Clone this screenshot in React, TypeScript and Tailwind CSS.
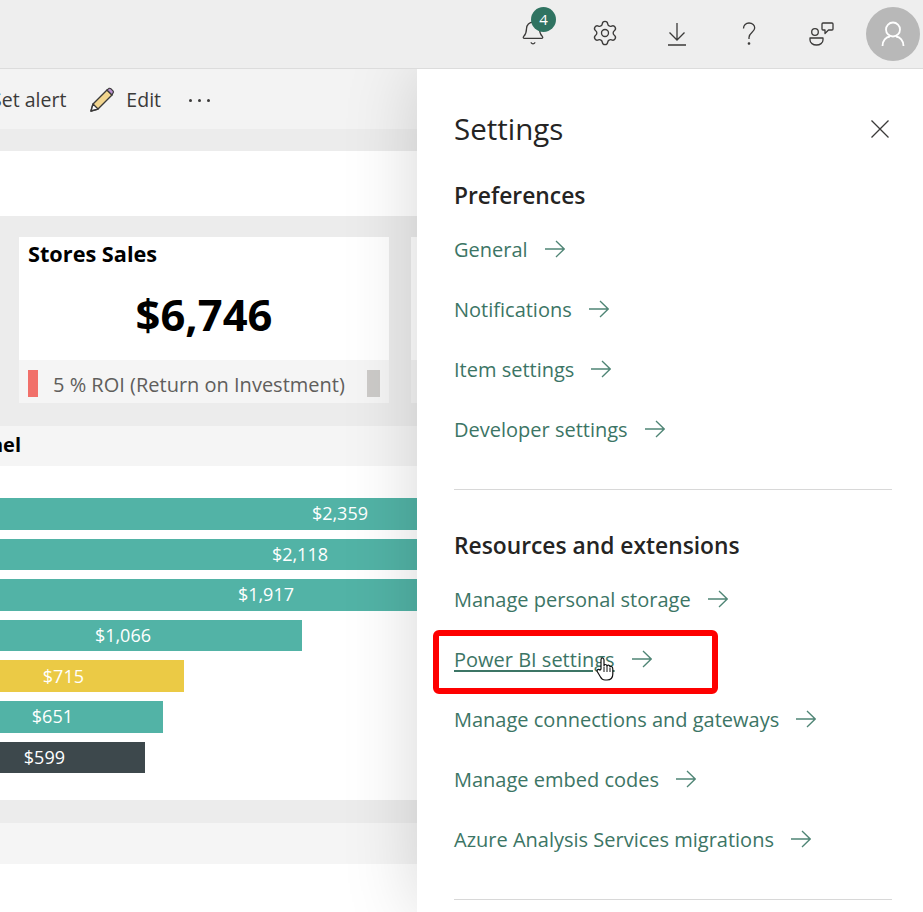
import { Bell, Settings } from 'lucide-react';

const bars = [
  { value: '$2,359', width: 'w-[417px]', pad: 'pr-[49px]', color: 'bg-[#52b3a6]' },
  { value: '$2,118', width: 'w-[417px]', pad: 'pr-[89px]', color: 'bg-[#52b3a6]' },
  { value: '$1,917', width: 'w-[417px]', pad: 'pr-[123px]', color: 'bg-[#52b3a6]' },
  { value: '$1,066', width: 'w-[302px]', pad: 'pr-[151px]', color: 'bg-[#52b3a6]' },
  { value: '$715', width: 'w-[184px]', pad: 'pr-[100px]', color: 'bg-[#ebca45]' },
  { value: '$651', width: 'w-[163px]', pad: 'pr-[90px]', color: 'bg-[#52b3a6]' },
  { value: '$599', width: 'w-[145px]', pad: 'pr-[80px]', color: 'bg-[#3d484c]' },
];

const preferences = ['General', 'Notifications', 'Item settings', 'Developer settings'];
const resources = [
  'Manage personal storage',
  'Power BI settings',
  'Manage connections and gateways',
  'Manage embed codes',
  'Azure Analysis Services migrations',
];

function SettingsLink({ label }: { label: string }) {
  const active = label === 'Power BI settings';
  return (
    <div className="flex h-[60px] items-center text-[20px] text-[#3c7565]">
      <span className={active ? 'underline underline-offset-[3px] decoration-[2px]' : ''}>{label}</span>
      <svg width="20" height="18" viewBox="0 0 20 18" fill="none" stroke="#4f8575" strokeWidth="1.3" className="mb-[3px] ml-[17px]">
        <path d="M0 9 H19 M11 1 L19.2 9 L11 17" />
      </svg>
    </div>
  );
}

function Pencil() {
  return (
    <svg width="26" height="26" viewBox="0 0 26 26" fill="none">
      <path d="M2 24 L4 17 L18 3 L23 8 L9 22 Z" fill="#f2d58e" stroke="#3b3a39" strokeWidth="1.4" strokeLinejoin="round" />
      <path d="M18 3 L20 1.4 Q21 1 22 1.8 L24 3.8 Q25 5 24 6 L23 8 Z" fill="#b98fd0" stroke="#3b3a39" strokeWidth="1.2" strokeLinejoin="round" />
      <path d="M2 24 L4 17 L9 22 Z" fill="#fff" stroke="#3b3a39" strokeWidth="1.4" strokeLinejoin="round" />
    </svg>
  );
}

function DownloadIcon() {
  return (
    <svg width="20" height="24" viewBox="0 0 20 24" fill="none" stroke="#3b3a39" strokeWidth="1.3">
      <path d="M10 1 V17.5 M2.5 10.5 L10 18 L17.5 10.5 M1 23 H19" />
    </svg>
  );
}

function HelpIcon() {
  return (
    <svg width="14" height="24" viewBox="0 0 14 24" fill="none" stroke="#3b3a39" strokeWidth="1.3">
      <path d="M1.5 6.5 C1.5 3 4 1 7 1 C10.5 1 12.7 3.2 12.7 6 C12.7 10 7 10.5 7 15.5 V17" />
      <circle cx="7" cy="21.5" r="0.7" fill="#3b3a39" />
    </svg>
  );
}

function FeedbackIcon() {
  return (
    <svg width="25" height="24" viewBox="0 0 25 24" fill="none" stroke="#3b3a39" strokeWidth="1.3" strokeLinejoin="round">
      <circle cx="6" cy="10" r="3.3" />
      <path d="M1 16 H14 V18 C14 21 11 23 7.5 23 C4 23 1 21 1 18 Z" />
      <path d="M14 1 H23 Q24 1 24 2 V7 Q24 8 23 8 H19.5 L16 11.5 V8 H14 Q13 8 13 7 V2 Q13 1 14 1 Z" />
    </svg>
  );
}

function HandCursor() {
  return (
    <svg width="18" height="24" viewBox="0 0 18 24" className="absolute left-[596px] top-[657px] z-30">
      <path
        d="M5 12 V3 Q5 1 6.5 1 Q8 1 8 3 V9 Q8 7.5 9.5 7.5 Q11 7.5 11 9.5 Q11 8 12.5 8.2 Q14 8.4 14 10 Q14.5 9 15.5 9.5 Q16.8 10 16.8 12 V17 Q16.8 23 11 23 H9 Q6 23 4.5 20 L1.5 15 Q0.6 13.4 1.8 12.6 Q3 12 4 13.2 Z"
        fill="#fff"
        stroke="#111"
        strokeWidth="1.2"
        strokeLinejoin="round"
      />
      <path d="M8 10 V15 M11 10 V15 M14 11 V15" stroke="#111" strokeWidth="1" />
    </svg>
  );
}

export default function App() {
  return (
    <div className="relative flex h-screen flex-col overflow-hidden bg-white font-['Open_Sans',sans-serif]">
      {/* Top bar */}
      <header className="relative z-20 flex h-[69px] shrink-0 items-center justify-end border-b border-[#dcdcdc] bg-[#eeeeee] pr-[3px]">
        <div className="relative flex w-[72px] justify-center">
          <Bell size={26} strokeWidth={1.2} className="mb-[2px] text-[#3b3a39]" />
          <span className="absolute left-[34px] top-[-13px] flex h-[25px] w-[25px] items-center justify-center rounded-full bg-[#2f7361] text-[15px] text-white">
            4
          </span>
        </div>
        <div className="flex w-[72px] justify-center">
          <Settings size={28} strokeWidth={1.15} className="mb-[2px] text-[#3b3a39]" />
        </div>
        <div className="flex w-[72px] justify-center">
          <DownloadIcon />
        </div>
        <div className="flex w-[72px] justify-center">
          <HelpIcon />
        </div>
        <div className="flex w-[72px] justify-center">
          <FeedbackIcon />
        </div>
        <div className="ml-[9px] flex h-[54px] w-[54px] items-center justify-center rounded-full bg-[#b8b8b8]">
          <svg width="24" height="26" viewBox="0 0 24 26" fill="none" stroke="#fff" strokeWidth="1.8">
            <circle cx="12" cy="8.5" r="7" />
            <path d="M1.5 25 C1.5 19.5 5 16 9 15.5 M22.5 25 C22.5 19.5 19 16 15 15.5" />
          </svg>
        </div>
      </header>

      <div className="flex min-h-0 flex-1">
        {/* Report behind the panel */}
        <main className="flex w-[417px] shrink-0 flex-col overflow-hidden bg-white">
          <div className="flex h-[60px] shrink-0 items-center justify-end whitespace-nowrap bg-[#f3f3f3] pr-[207px] pt-[2px] text-[19.5px] text-[#3b3a39]">
            <span>Set alert</span>
            <span className="ml-[23px]"><Pencil /></span>
            <span className="ml-[11px]">Edit</span>
            <span className="ml-[28px] flex gap-[6px]">
              <i className="h-[3px] w-[3px] rounded-full bg-[#3b3a39]" />
              <i className="h-[3px] w-[3px] rounded-full bg-[#3b3a39]" />
              <i className="h-[3px] w-[3px] rounded-full bg-[#3b3a39]" />
            </span>
          </div>
          <div className="h-[22px] shrink-0 bg-[#ececec]" />
          <div className="h-[65px] shrink-0 bg-white" />

          <div className="flex h-[210px] shrink-0 gap-[22px] bg-[#ececec] pl-[19px] pt-[21px]">
            <div className="flex h-[166px] w-[370px] shrink-0 flex-col">
              <div className="flex h-[123px] flex-col bg-white">
                <div className="pl-[9px] pt-[2px] text-[21.7px] font-bold leading-[30px] text-black">Stores Sales</div>
                <div className="pt-[15px] text-center text-[43.5px] font-bold leading-[62px] text-black">$6,746</div>
              </div>
              <div className="flex h-[43px] items-center bg-[#f5f5f5] pl-[9px] pr-[9px] pt-[4px] text-[20px] text-[#605e5c]">
                <div className="h-[27px] w-[10px] shrink-0 bg-[#f1706a]" />
                <div className="ml-[15px] flex-1 whitespace-nowrap pt-[2px]">5 % ROI (Return on Investment)</div>
                <div className="h-[27px] w-[13px] shrink-0 bg-[#cdcbc9]" />
              </div>
            </div>
            <div className="flex h-[166px] w-[370px] shrink-0 flex-col">
              <div className="h-[123px] bg-white" />
              <div className="h-[43px] bg-[#f5f5f5]" />
            </div>
          </div>

          <div className="flex h-[40px] shrink-0 items-center bg-[#f5f5f5] pb-[3px] text-[20px] font-bold text-black">
            <div className="flex w-[21px] justify-end whitespace-nowrap">Channel</div>
          </div>

          <div className="flex h-[334px] shrink-0 flex-col gap-[9px] bg-white pt-[32px]">
            {bars.map((bar) => (
              <div
                key={bar.value}
                className={`flex h-[31.6px] shrink-0 items-center justify-end text-[18px] text-white ${bar.width} ${bar.pad} ${bar.color}`}
              >
                {bar.value}
              </div>
            ))}
          </div>

          <div className="h-[23px] shrink-0 bg-[#ececec]" />
          <div className="h-[41px] shrink-0 bg-[#f5f5f5]" />
          <div className="flex-1 bg-white" />
        </main>

        {/* Settings panel */}
        <aside className="relative z-10 flex-1 bg-white pl-[37px] pr-[31px] shadow-[0_0_70px_rgba(0,0,0,0.16)]">
          <div className="flex items-center justify-between pb-[25px] pt-[42px]">
            <h1 className="text-[29.5px] leading-[36px] text-[#252423]">Settings</h1>
            <svg width="18" height="18" viewBox="0 0 18 18" fill="none" stroke="#3b3a39" strokeWidth="1.3" className="mr-[3px]">
              <path d="M0.5 0.5 L17.5 17.5 M17.5 0.5 L0.5 17.5" />
            </svg>
          </div>
          <h2 className="flex h-[48px] items-center text-[22.8px] font-semibold text-[#252423]">Preferences</h2>
          {preferences.map((label) => (
            <SettingsLink key={label} label={label} />
          ))}
          <div className="mt-[29px] h-px bg-[#d8d8d8]" />
          <h2 className="mt-[32px] flex h-[48px] items-center text-[22.8px] font-semibold text-[#252423]">
            Resources and extensions
          </h2>
          {resources.map((label) => (
            <SettingsLink key={label} label={label} />
          ))}
          <div className="mt-[29px] h-px bg-[#d8d8d8]" />
        </aside>
      </div>

      {/* Annotation over the screenshot */}
      <div className="absolute left-[433px] top-[630px] z-30 h-[64px] w-[285px] rounded-[6px] border-[6px] border-[#fe0000]" />
      <HandCursor />
    </div>
  );
}
